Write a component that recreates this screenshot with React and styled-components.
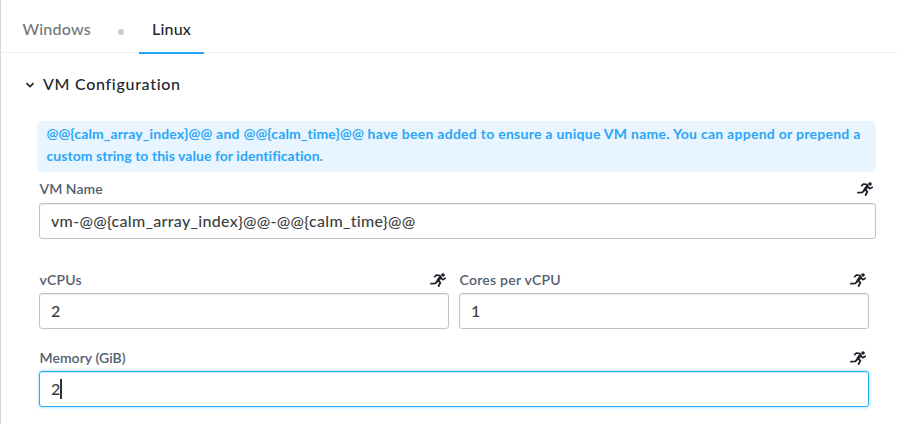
import React from 'react';
import styled, { createGlobalStyle } from 'styled-components';

const GlobalStyle = createGlobalStyle`
  * { box-sizing: border-box; }
  body { margin: 0; background: #fff; font-family: Lato, "Open Sans", sans-serif; }
`;

const Panel = styled.main`
  height: 424px;
  overflow: hidden;
  border-left: 1px solid #d0d5e2;
  background: #fff;
`;

const TabBar = styled.nav`
  display: flex;
  height: 53px;
  padding-left: 21.5px;
  border-bottom: 1px solid #f0f1f3;
`;

const Tab = styled.button`
  height: 54px;
  width: ${(p) => p.$width}px;
  padding: 5px ${(p) => (p.$active ? 13 : 0)}px 0;
  border: 0;
  border-bottom: 2px solid ${(p) => (p.$active ? '#22a5f7' : 'transparent')};
  background: none;
  color: ${(p) => (p.$active ? '#22272e' : '#6f787e')};
  font: 500 16px/46px Lato, sans-serif;
  letter-spacing: 0.2px;
  text-align: left;
  white-space: nowrap;
`;

const Dot = styled.span`
  width: 6px;
  height: 6px;
  margin: 29px 15px 0 27px;
  border-radius: 50%;
  background: #c8c9ca;
`;

const SectionHeader = styled.h2`
  display: flex;
  align-items: center;
  gap: 8px;
  height: 24px;
  margin: 18px 0 26px;
  padding-left: 24px;
  color: #22272e;
  font-size: 16px;
  font-weight: 500;
  letter-spacing: 0.7px;
`;

const Notice = styled.p`
  width: 839px;
  height: 51px;
  margin: 0 0 0 36px;
  padding: 2px 10px 5px 9.5px;
  border-radius: 6px;
  background: #e8f5fe;
  color: #2ba6f8;
  font-size: 14px;
  font-weight: 700;
  line-height: 22px;
  letter-spacing: 0.27px;
  white-space: nowrap;
`;

const Macro = styled.span`
  letter-spacing: 0.12px;
`;

const NoticeEnd = styled.span`
  letter-spacing: 0.05px;
`;

const Form = styled.form`
  display: flex;
  flex-direction: column;
  padding: 7px 0 0 38px;
`;

const Row = styled.div`
  display: flex;
  gap: 10px;
  margin-bottom: ${(p) => p.$after || 0}px;
`;

const Field = styled.div`
  width: ${(p) => p.$width}px;
`;

const LabelRow = styled.div`
  display: flex;
  align-items: center;
  justify-content: space-between;
  height: 20px;
  margin-bottom: ${(p) => p.$gap}px;
  padding: 0 3px 0 0.5px;
`;

const Label = styled.label`
  color: #526071;
  font-size: 14px;
  font-weight: 600;
  line-height: 20px;
  letter-spacing: ${(p) => p.$spacing}px;
`;

const Control = styled.div`
  display: flex;
  align-items: center;
  height: 36px;
  padding: 0 11px;
  border: 1px solid ${(p) => (p.$focused ? '#22b0ef' : '#bfc4ca')};
  border-radius: 3px;
  box-shadow: ${(p) =>
    p.$focused
      ? '0 0 3px 1px #bce8fc, inset 0 1px 1px #d4eefa'
      : 'inset 0 1px 1px #e6e8ea'};
  color: #3b3e41;
  font-size: 16px;
  font-weight: 500;
  line-height: 20px;
  letter-spacing: 0.32px;
`;

const Caret = styled.span`
  width: 2px;
  height: 20px;
  margin-left: -1px;
  background: #303336;
`;

const Icon = styled.svg`
  display: block;
  flex: none;
`;

const ChevronIcon = styled(Icon)`
  margin-top: 3px;
`;

const Chevron = () => (
  <ChevronIcon width="10" height="8" viewBox="0 0 10 8" fill="none" stroke="#22272e" strokeWidth="1.7">
    <path d="M1.4 2.2 5 5.6 8.6 2.2" />
  </ChevronIcon>
);

const Runner = () => (
  <Icon width="16" height="14" viewBox="0 0 48 42" fill="none" stroke="#1d2229" strokeWidth="5" strokeLinecap="round" strokeLinejoin="round">
    <circle cx="39" cy="6" r="5.5" fill="#1d2229" stroke="none" />
    <path d="M31 13 24 22" strokeWidth="9" />
    <path d="M30 8 20 6 14 11" strokeWidth="5" />
    <path d="M33 14 38 20 46 16" strokeWidth="5" />
    <path d="M23 24 16 31 3 32" strokeWidth="5.5" />
    <path d="M24 22 31 29 26 39" strokeWidth="5.5" />
  </Icon>
);

function TextField({ label, value, width, spacing = 0.05, gap = 3, focused }) {
  return (
    <Field $width={width}>
      <LabelRow $gap={gap}>
        <Label $spacing={spacing}>{label}</Label>
        <Runner />
      </LabelRow>
      <Control $focused={focused}>
        <span>{value}</span>
        {focused && <Caret />}
      </Control>
    </Field>
  );
}

export default function App() {
  return (
    <>
      <GlobalStyle />
      <Panel>
        <TabBar>
          <Tab $width={68.5}>Windows</Tab>
          <Dot />
          <Tab $active $width={65}>Linux</Tab>
        </TabBar>
        <SectionHeader>
          <Chevron />
          VM Configuration
        </SectionHeader>
        <Notice>
          <Macro>{'@@{calm_array_index}@@'}</Macro> and <Macro>{'@@{calm_time}@@'}</Macro> have been added to ensure a unique VM name. You can append or prepend a
          <br />
          <NoticeEnd>custom string to this value for identification.</NoticeEnd>
        </Notice>
        <Form>
          <Row $after={31}>
            <TextField label="VM Name" value="vm-@@{calm_array_index}@@-@@{calm_time}@@" width={837} gap={4} />
          </Row>
          <Row $after={19}>
            <TextField label="vCPUs" value="2" width={410} spacing={0.2} />
            <TextField label="Cores per vCPU" value="1" width={410} spacing={0.25} />
          </Row>
          <Row>
            <TextField label="Memory (GiB)" value="2" width={830} focused />
          </Row>
        </Form>
      </Panel>
    </>
  );
}
